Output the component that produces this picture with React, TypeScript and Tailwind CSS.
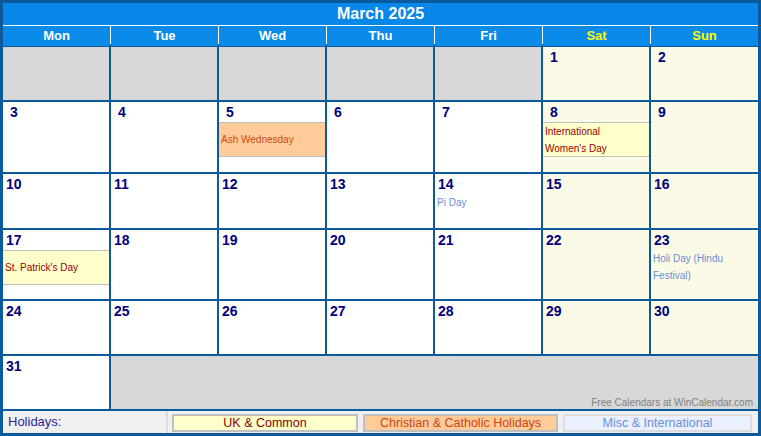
type Ev = { text: string[]; kind: "uk" | "christian" | "misc" };

type Day = { n?: number; weekend?: boolean; ev?: Ev };

const rows: Day[][] = [
  [{}, {}, {}, {}, {}, { n: 1, weekend: true }, { n: 2, weekend: true }],
  [
    { n: 3 },
    { n: 4 },
    { n: 5, ev: { text: ["Ash Wednesday"], kind: "christian" } },
    { n: 6 },
    { n: 7 },
    { n: 8, weekend: true, ev: { text: ["International", "Women's Day"], kind: "uk" } },
    { n: 9, weekend: true },
  ],
  [
    { n: 10 },
    { n: 11 },
    { n: 12 },
    { n: 13 },
    { n: 14, ev: { text: ["Pi Day"], kind: "misc" } },
    { n: 15, weekend: true },
    { n: 16, weekend: true },
  ],
  [
    { n: 17, ev: { text: ["St. Patrick's Day"], kind: "uk" } },
    { n: 18 },
    { n: 19 },
    { n: 20 },
    { n: 21 },
    { n: 22, weekend: true },
    { n: 23, weekend: true, ev: { text: ["Holi Day (Hindu", "Festival)"], kind: "misc" } },
  ],
  [
    { n: 24 },
    { n: 25 },
    { n: 26 },
    { n: 27 },
    { n: 28 },
    { n: 29, weekend: true },
    { n: 30, weekend: true },
  ],
];

const heights = ["h-[53px]", "h-[70px]", "h-[54px]", "h-[69px]", "h-[53px]"];

const days = ["Mon", "Tue", "Wed", "Thu", "Fri", "Sat", "Sun"];

function Num({ n }: { n: number }) {
  return (
    <div className="h-[20px] pl-[3px] text-[14px] leading-[21px] font-bold text-[#000080] whitespace-pre">
      {n < 10 ? "\u00a0" + n : n}
    </div>
  );
}

function Event({ ev }: { ev: Ev }) {
  if (ev.kind === "misc") {
    return (
      <div className="pl-[2px] text-[10px] leading-[17px] text-[#6a8fd2]">
        {ev.text.map((t) => (
          <div key={t}>{t}</div>
        ))}
      </div>
    );
  }
  const box =
    ev.kind === "uk"
      ? "bg-[#ffffcc] text-[#990000]"
      : "bg-[#ffcc99] text-[#cc4a14]";
  return (
    <div
      className={`h-[35px] border-y border-[#c0c0c0] flex flex-col justify-center pl-[2px] text-[10px] leading-[17px] ${box}`}
    >
      {ev.text.map((t) => (
        <div key={t}>{t}</div>
      ))}
    </div>
  );
}

function Cell({ d, h }: { d: Day; h: string }) {
  const bg = d.n === undefined ? "bg-[#d8d8d8]" : d.weekend ? "bg-[#fafae6]" : "bg-white";
  return (
    <div className={`${h} ${bg} overflow-hidden`}>
      {d.n !== undefined && <Num n={d.n} />}
      {d.ev && <Event ev={d.ev} />}
    </div>
  );
}

export default function App() {
  return (
    <div className="w-[761px] h-[436px] bg-[#0b5a9c] p-[3px] flex flex-col font-['Liberation_Sans',Arial,sans-serif]">
      <div className="h-[22px] bg-[#0787e8] text-white font-bold text-[16px] flex items-center justify-center">
        March 2025
      </div>
      <div className="h-px bg-white" />
      <div className="grid grid-cols-[repeat(6,107px)_1fr] gap-x-px bg-white h-[18px]">
        {days.map((d, i) => (
          <div
            key={d}
            className={`bg-[#0a8ae9] flex items-center justify-center text-[13px] font-bold ${
              i >= 5 ? "text-[#ffff00]" : "text-white"
            }`}
          >
            {d}
          </div>
        ))}
      </div>
      <div className="mt-[3px] grid grid-cols-[repeat(6,106px)_1fr] gap-[2px]">
        {rows.map((r, ri) =>
          r.map((d, ci) => <Cell key={`${ri}-${ci}`} d={d} h={heights[ri]} />)
        )}
        <Cell d={{ n: 31 }} h="h-[53px]" />
        <div className="col-span-6 h-[53px] bg-[#d8d8d8] flex items-end justify-end pr-[5px] text-[10px] leading-[13px] text-[#808080]">
          Free Calendars at WinCalendar.com
        </div>
      </div>
      <div className="mt-[2px] h-[22px] bg-[#f0f0f0] flex items-center">
        <div className="w-[165px] h-full border-r-2 border-[#dcdcdc] pl-[5px] flex items-center text-[13px] text-[#2a1f9e]">
          Holidays:
        </div>
        <div className="flex items-center gap-[5px] pl-[4px] pt-[1px]">
          <div className="w-[186px] h-[18px] border-2 border-[#c0c0c0] bg-[#ffffcc] text-[#880000] text-[12.5px] leading-[14px] flex items-center justify-center">
            UK &amp; Common
          </div>
          <div className="w-[195px] h-[18px] border-2 border-[#c0c0c0] bg-[#ffcc99] text-[#cc4414] text-[12.5px] leading-[14px] flex items-center justify-center">
            Christian &amp; Catholic Holidays
          </div>
          <div className="w-[189px] h-[18px] border-2 border-[#dcdcdc] bg-[#eaf0ff] text-[#6a8fd6] text-[12.5px] leading-[14px] flex items-center justify-center">
            Misc &amp; International
          </div>
        </div>
      </div>
    </div>
  );
}
